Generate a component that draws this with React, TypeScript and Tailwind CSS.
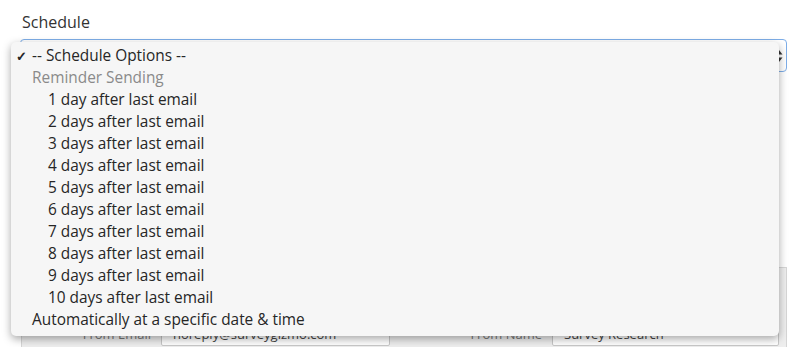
const days = Array.from({ length: 10 }, (_, i) => `${i + 1} ${i === 0 ? 'day' : 'days'} after last email`);

function ScheduleMenu() {
  return (
    <div className="absolute left-[11px] top-[42px] w-[768px] rounded-[5px] bg-[#f6f6f6] pt-[3px] pb-[5px] text-[15.4px] text-[#262626] shadow-[0_3px_8px_rgba(0,0,0,0.35)] font-['Open_Sans',sans-serif]">
      <div className="flex h-[22px] items-center">
        <span className="w-[21px] pl-[5px] text-[13px] font-bold leading-none">✓</span>
        <span>-- Schedule Options --</span>
      </div>
      <div className="flex h-[22px] items-center pl-[21px] text-[#8a8a8a]">Reminder Sending</div>
      {days.map((d) => (
        <div key={d} className="flex h-[22px] items-center pl-[37px]">{d}</div>
      ))}
      <div className="flex h-[22px] items-center pl-[21px]">Automatically at a specific date &amp; time</div>
    </div>
  );
}

export default function App() {
  return (
    <div className="relative h-[347px] w-[789px] overflow-hidden bg-white font-['Open_Sans',sans-serif] text-[#333]">
      <div className="pl-[22px] pt-[12px]">
        <label className="block text-[16px] leading-[20px]">Schedule</label>
      </div>
      <div className="ml-[20px] mr-[2px] mt-[7px] flex h-[33px] items-center justify-end rounded-[4px] border border-[#7eaee8] bg-white pr-[3px]">
        <svg width="8" height="14" viewBox="0 0 8 14">
          <path d="M4 1 L7.5 5.5 H0.5 Z" fill="#333" />
          <path d="M4 13 L7.5 8.5 H0.5 Z" fill="#333" />
        </svg>
      </div>

      <div className="ml-[21px] mr-[2px] mt-[195px] h-[100px] border border-[#d6d6d6] bg-[#eeeeee] pt-[56px]">
        <div className="flex items-center">
          <span className="w-[139px] pr-[10px] text-right text-[13px] text-[#777]">From Email</span>
          <div className="flex h-[22px] w-[229px] items-center rounded-[2px] border border-[#c8c8c8] bg-white px-[11px] text-[13px] text-[#444]">
            noreply@surveygizmo.com
          </div>
          <span className="w-[162px] pr-[10px] text-right text-[13px] text-[#777]">From Name</span>
          <div className="flex h-[22px] w-[227px] items-center rounded-[2px] border border-[#c8c8c8] bg-white px-[11px] text-[13px] text-[#444]">
            Survey Research
          </div>
        </div>
      </div>

      <ScheduleMenu />
    </div>
  );
}
